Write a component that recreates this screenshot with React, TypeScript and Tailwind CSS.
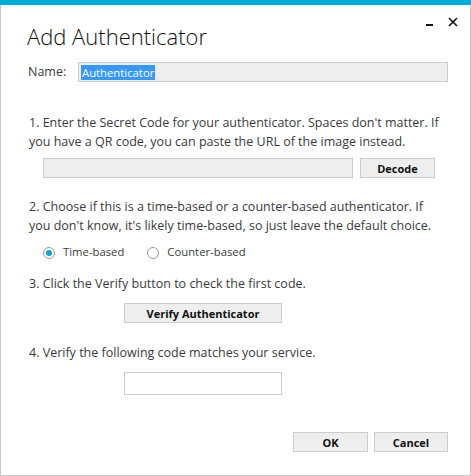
import React from "react";

const font = { fontFamily: '"Open Sans", "Noto Sans", sans-serif' };

function Btn({ label, className = "" }: { label: string; className?: string }) {
  return (
    <button
      className={`h-[20px] bg-[#eeeeee] border border-[#cccccc] text-[11px] font-bold text-[#111] leading-none flex items-center justify-center ${className}`}
    >
      {label}
    </button>
  );
}

function Radio({ checked, label }: { checked?: boolean; label: string }) {
  return (
    <label className="flex items-center gap-[8px]">
      <span className="w-[12px] h-[12px] rounded-full border border-[#9a9a9a] bg-white flex items-center justify-center">
        {checked && <span className="w-[6px] h-[6px] rounded-full bg-[#0fa3dc]" />}
      </span>
      <span className="text-[11.3px]">{label}</span>
    </label>
  );
}

export default function App() {
  return (
    <div className="w-[471px] h-[476px] flex flex-col bg-white text-[#3a3a3a] text-[12.5px]" style={font}>
      {/* accent strip */}
      <div className="h-[5px] bg-[#00acd8]" />

      <div className="relative flex-1 border-x border-b border-[#c8c8c8] pt-[16px] pl-[26px] pr-[22px]">
        {/* window controls */}
        <div className="absolute top-[6px] right-[12px] flex items-start gap-[15px]">
          <span className="block w-[7px] h-[2px] bg-[#111] mt-[13px]" />
          <svg width="10" height="10" viewBox="0 0 10 10" className="mt-[6px]">
            <path d="M1 1 L9 9 M9 1 L1 9" stroke="#111" strokeWidth="1.6" />
          </svg>
        </div>

        <h1 className="text-[22px] font-light leading-[30px] text-[#111]">Add Authenticator</h1>

        {/* name */}
        <div className="flex items-center mt-[11px] pl-[1px]">
          <span className="w-[50px]">Name:</span>
          <div className="flex-1 h-[20px] bg-[#eeeeee] border border-[#cccccc] flex items-center pl-[2px]">
            <span className="bg-[#3399ff] text-white text-[11.3px] leading-[15px] px-[1px]">Authenticator</span>
          </div>
        </div>

        {/* step 1 */}
        <p className="mt-[31px] leading-[19px] pl-[2px] whitespace-nowrap">
          1. Enter the Secret Code for your authenticator. Spaces don't matter. If
          <br />
          you have a QR code, you can paste the URL of the image instead.
        </p>
        <div className="flex mt-[7px] pl-[16px] gap-[7px]">
          <div className="w-[310px] h-[20px] bg-[#eeeeee] border border-[#cccccc]" />
          <Btn label="Decode" className="w-[75px]" />
        </div>

        {/* step 2 */}
        <p className="mt-[19px] leading-[19px] pl-[2px] whitespace-nowrap">
          2. Choose if this is a time-based or a counter-based authenticator. If
          <br />
          you don't know, it's likely time-based, so just leave the default choice.
        </p>
        <div className="flex items-center h-[19px] mt-[8px] pl-[16px] gap-[23px]">
          <Radio checked label="Time-based" />
          <Radio label="Counter-based" />
        </div>

        {/* step 3 */}
        <p className="mt-[12px] leading-[19px] pl-[2px]">3. Click the Verify button to check the first code.</p>
        <div className="flex mt-[10px] pl-[97px]">
          <Btn label="Verify Authenticator" className="w-[158px]" />
        </div>

        {/* step 4 */}
        <p className="mt-[20px] leading-[19px] pl-[2px]">4. Verify the following code matches your service.</p>
        <div className="flex mt-[10px] pl-[97px]">
          <div className="w-[158px] h-[23px] bg-white border border-[#cccccc]" />
        </div>

        {/* footer */}
        <div className="flex justify-end gap-[6px] mt-[37px]">
          <Btn label="OK" className="w-[75px]" />
          <Btn label="Cancel" className="w-[74px]" />
        </div>
      </div>
    </div>
  );
}
